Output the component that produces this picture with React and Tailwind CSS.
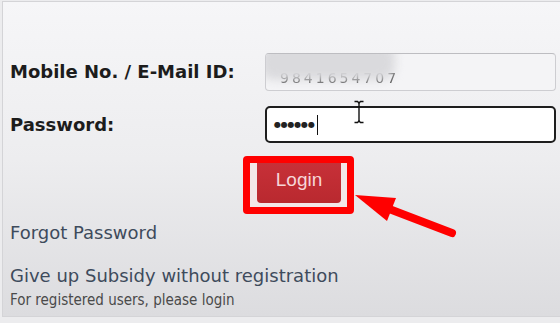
import React from 'react';

// LPG portal login panel, with the red tutorial annotation drawn over it
const sans = { fontFamily: '"DejaVu Sans", Verdana, sans-serif' };
const narrow = { fontFamily: '"DejaVu Sans Condensed", "DejaVu Sans", sans-serif' };
const arial = { fontFamily: '"Liberation Sans", Arial, sans-serif' };

function Field({ label, children, className = '' }) {
  return (
    <div className={`flex items-center pl-[7px] ${className}`}>
      <div className="w-[255px] shrink-0 text-[18px] font-bold text-[#1c1c1c] leading-[22px]" style={sans}>
        {label}
      </div>
      {children}
    </div>
  );
}

function Overlay() {
  return (
    <svg className="absolute inset-0 pointer-events-none" width="560" height="323" viewBox="0 0 560 323">
      {/* red arrow pointing at the Login button */}
      <line x1="384" y1="207" x2="452" y2="233" stroke="#ff0000" strokeWidth="8" strokeLinecap="round" />
      <polygon points="355,195 396,198 387,221" fill="#ff0000" />
      {/* mouse I-beam */}
      <g stroke="#111" strokeWidth="1.4" fill="none">
        <line x1="359" y1="102" x2="359" y2="122" />
        <path d="M354.5 101.5 h3 l1.5 1.5 l1.5 -1.5 h3" />
        <path d="M354.5 122.5 h3 l1.5 -1.5 l1.5 1.5 h3" />
      </g>
    </svg>
  );
}

export default function App() {
  return (
    <div className="relative w-[560px] h-[323px] overflow-hidden bg-[#ececee]">
      <div className="mt-[1px] ml-[2px] w-[600px] h-[316px] border-l border-t border-b border-[#d4d4d7] bg-gradient-to-b from-[#f6f6f8] via-[#ededef] to-[#dcdcdf]">
        <Field label="Mobile No. / E-Mail ID:" className="pt-[51px]">
          <div className="relative w-[291px] h-[38px] rounded-[4px] border border-[#cdcdd1] border-t-[#bdbdc1] bg-[#f4f4f6] overflow-hidden">
            <div className="absolute left-[14px] top-[15px] text-[14px] leading-[18px] tracking-[3px] text-[#555] blur-[0.6px]" style={sans}>
              9841654707
            </div>
            <div className="absolute left-[-6px] top-[-10px] w-[135px] h-[36px] rounded-[14px] bg-[#dadadd] blur-[5px]" />
          </div>
        </Field>

        <Field label="Password:" className="mt-[15px]">
          <div className="flex items-center w-[291px] h-[37px] rounded-[5px] border-2 border-[#1e1e1e] bg-white pl-[7px]">
            <span className="text-[8px] tracking-[-0.2px] text-[#222] leading-none" style={sans}>
              ●●●●●●
            </span>
            <span className="ml-[2px] w-[1.5px] h-[20px] bg-[#111]" />
          </div>
        </Field>

        <div className="ml-[240px] mt-[13px] w-[111px] h-[58px] rounded-[4px] border-[7px] border-[#ff0000] bg-[#f3e7e8] pl-[7px] pr-[6px] pb-[4px]">
          <div
            className="flex items-center justify-center h-full rounded-b-[4px] bg-gradient-to-b from-[#c73038] to-[#b9292f] text-[19px] text-[#f6d6d8] pb-[5px]"
            style={arial}
          >
            Login
          </div>
        </div>

        <div className="pl-[7px] mt-[8px] text-[18px] leading-[22px] text-[#3e4b5c]" style={sans}>
          Forgot Password
        </div>
        <div className="pl-[7px] mt-[21px] text-[18px] leading-[22px] text-[#3e4b5c]" style={sans}>
          Give up Subsidy without registration
        </div>
        <div className="pl-[7px] mt-[5px] text-[15px] leading-[17px] text-[#4a4a4a] font-stretch-condensed" style={narrow}>
          For registered users, please login
        </div>
      </div>
      <Overlay />
    </div>
  );
}
